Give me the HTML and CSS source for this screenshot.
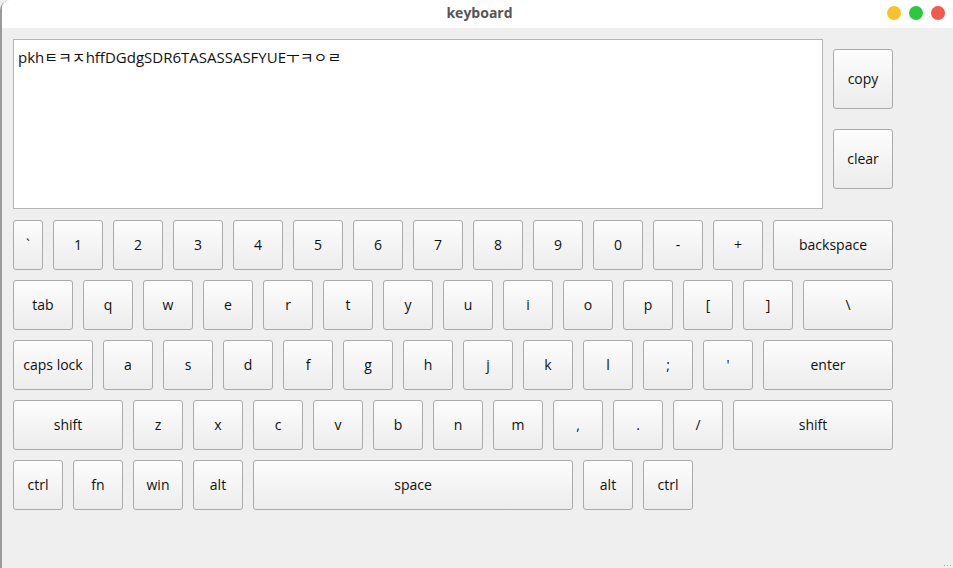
FILE: index.html
```html
<!DOCTYPE html>
<html>
<head>
<meta charset="utf-8">
<link rel="stylesheet" href="styles.css">
</head>
<body>
<div class="window">
  <div class="titlebar">
    <span class="title">keyboard</span>
    <div class="controls">
      <span class="dot yellow"></span>
      <span class="dot green"></span>
      <span class="dot red"></span>
    </div>
  </div>
  <div class="content">
    <div class="top">
      <div class="textarea">pkhㅌㅋㅈhffDGdgSDR6TASASSASFYUEㅜㅋㅇㄹ</div>
      <div class="side">
        <button class="key sq">copy</button>
        <button class="key sq">clear</button>
      </div>
    </div>
    <div class="keyboard">
      <div class="row">
        <button class="key w30">`</button>
        <button class="key">1</button><button class="key">2</button><button class="key">3</button><button class="key">4</button><button class="key">5</button><button class="key">6</button><button class="key">7</button><button class="key">8</button><button class="key">9</button><button class="key">0</button><button class="key">-</button><button class="key">+</button>
        <button class="key w120">backspace</button>
      </div>
      <div class="row">
        <button class="key w60">tab</button>
        <button class="key">q</button><button class="key">w</button><button class="key">e</button><button class="key">r</button><button class="key">t</button><button class="key">y</button><button class="key">u</button><button class="key">i</button><button class="key">o</button><button class="key">p</button><button class="key">[</button><button class="key">]</button>
        <button class="key w90">\</button>
      </div>
      <div class="row">
        <button class="key w80">caps lock</button>
        <button class="key">a</button><button class="key">s</button><button class="key">d</button><button class="key">f</button><button class="key">g</button><button class="key">h</button><button class="key">j</button><button class="key">k</button><button class="key">l</button><button class="key">;</button><button class="key">'</button>
        <button class="key w130">enter</button>
      </div>
      <div class="row">
        <button class="key w110">shift</button>
        <button class="key">z</button><button class="key">x</button><button class="key">c</button><button class="key">v</button><button class="key">b</button><button class="key">n</button><button class="key">m</button><button class="key">,</button><button class="key">.</button><button class="key">/</button>
        <button class="key w160">shift</button>
      </div>
      <div class="row">
        <button class="key">ctrl</button><button class="key">fn</button><button class="key">win</button><button class="key">alt</button>
        <button class="key w320">space</button>
        <button class="key">alt</button><button class="key">ctrl</button>
      </div>
    </div>
  </div>
  <div class="grip"><span></span><span></span><span></span></div>
</div>
</body>
</html>
```

FILE: styles.css
```css
html, body {
  margin: 0;
  padding: 0;
  width: 953px;
  height: 568px;
  overflow: hidden;
  background: #efefef;
  font-family: "Open Sans", "Noto Sans", "Noto Sans CJK KR", sans-serif;
}
.window {
  position: relative;
  width: 953px;
  height: 568px;
  box-sizing: border-box;
  border-left: 2px solid #9a9a9a;
  border-top-left-radius: 10px;
  background: #efefef;
}
.titlebar {
  height: 28px;
  background: #ffffff;
  border-top-left-radius: 8px;
  display: flex;
  align-items: center;
  justify-content: center;
  position: relative;
}
.title {
  font-weight: bold;
  font-size: 14px;
  color: #555555;
  margin-left: 4px;
  margin-bottom: 4px;
}
.controls {
  position: absolute;
  right: 8px;
  top: 6px;
  display: flex;
  gap: 8px;
}
.dot {
  width: 14px;
  height: 14px;
  border-radius: 50%;
  display: block;
}
.yellow { background: #f8c22a; }
.green { background: #2bc840; }
.red { background: #f5584e; }
.content {
  padding: 11px 0 0 11px;
}
.top {
  display: flex;
  gap: 10px;
  height: 170px;
}
.textarea {
  width: 810px;
  height: 170px;
  box-sizing: border-box;
  background: #ffffff;
  border: 1px solid #b5b5b5;
  padding: 6px 4px;
  font-size: 15px;
  color: #111;
  font-family: "Open Sans", "Noto Sans CJK KR", sans-serif;
  letter-spacing: 0;
}
.side {
  display: flex;
  flex-direction: column;
  gap: 20px;
  padding-top: 10px;
}
.keyboard {
  margin-top: 11px;
  display: flex;
  flex-direction: column;
  gap: 10px;
}
.row {
  display: flex;
  gap: 10px;
}
.key {
  width: 50px;
  height: 50px;
  box-sizing: border-box;
  margin: 0;
  padding: 0;
  border: 1px solid #ababab;
  border-radius: 3px;
  background: linear-gradient(#fdfdfd, #ececec);
  font-family: "Open Sans", "Noto Sans", sans-serif;
  font-size: 14px;
  color: #111;
  display: flex;
  align-items: center;
  justify-content: center;
  padding-bottom: 2px;
}
.sq { width: 60px; height: 60px; }
.w30 { width: 30px; }
.w60 { width: 60px; }
.w80 { width: 80px; }
.w90 { width: 90px; }
.w110 { width: 110px; }
.w120 { width: 120px; }
.w130 { width: 130px; }
.w160 { width: 160px; }
.w320 { width: 320px; }
.grip {
  position: absolute;
  right: 2px;
  bottom: 2px;
  display: flex;
  gap: 2px;
  align-items: flex-end;
}
.grip span {
  width: 1px;
  height: 1px;
  background: #aaa;
  display: block;
}
```
